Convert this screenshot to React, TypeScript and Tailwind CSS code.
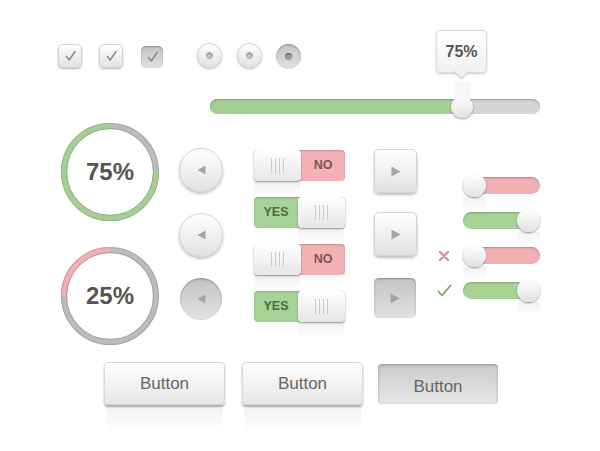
import React from "react";

const raised =
  "bg-linear-to-b from-white to-[#e2e2e2] border border-[#d4d4d4] shadow-[0_1px_2px_rgba(0,0,0,0.3)]";
const pressed =
  "bg-linear-to-b from-[#c4c4c4] to-[#e2e2e2] shadow-[inset_0_1px_2px_rgba(0,0,0,0.3),0_1px_0_rgba(255,255,255,0.8)]";

function Check() {
  return (
    <svg width="13" height="12" viewBox="0 0 13 12">
      <path d="M2.5 6.5 L5.2 10 L11 1.5" stroke="#8c8c8c" strokeWidth="1.6" fill="none" strokeLinecap="round" strokeLinejoin="round" />
    </svg>
  );
}

function Checkbox({ down }: { down?: boolean }) {
  return (
    <div
      className={`flex items-center justify-center rounded-[5px] ${
        down ? `size-[22px] mt-[2px] ${pressed}` : `size-[24px] ${raised}`
      }`}
    >
      <Check />
    </div>
  );
}

function Radio({ down }: { down?: boolean }) {
  return (
    <div
      className={`flex items-center justify-center rounded-full size-[25px] ${
        down ? pressed : raised
      }`}
    >
      <div
        className={`rounded-full size-[7px] ${
          down
            ? "bg-[#9a9a9a] shadow-[inset_0_1px_1px_rgba(0,0,0,0.5)]"
            : "bg-[#c4c4c4] border border-[#a8a8a8] shadow-[inset_0_1px_1px_rgba(0,0,0,0.3)]"
        }`}
      />
    </div>
  );
}

function Slider() {
  return (
    <div className="relative w-[330px] h-[15px] rounded-full bg-[#d6d6d6] shadow-[inset_0_1px_2px_rgba(0,0,0,0.3)] flex items-center">
      {/* reflection under tooltip */}
      <div className="absolute left-[244px] top-[-17px] w-[17px] h-[50px] bg-linear-to-b from-[rgba(0,0,0,0.035)] to-transparent" />
      <div className="h-full w-[252px] rounded-l-full bg-[#a6cf95] shadow-[inset_0_1px_2px_rgba(0,0,0,0.25)]" />
      <div className="relative -ml-[11px] size-[22px] rounded-full bg-linear-to-b from-white to-[#e0e0e0] shadow-[0_1px_2px_rgba(0,0,0,0.4)]" />
      {/* tooltip */}
      <div className="absolute left-[226px] top-[-69px] flex flex-col items-center">
        <div className="relative z-10 flex items-center justify-center w-[51px] h-[43px] rounded-[4px] bg-linear-to-b from-white to-[#f1f1f1] border border-[#dcdcdc] shadow-[0_1px_2px_rgba(0,0,0,0.2)]">
          <span className="text-[16px] font-bold text-[#555]">75%</span>
        </div>
        <div className="relative z-20 -mt-[7px] size-[11px] rotate-45 bg-[#f1f1f1] border-r border-b border-[#d4d4d4] shadow-[1px_1px_1px_rgba(0,0,0,0.08)]" />
      </div>
    </div>
  );
}

function Ring({ value, color, edge }: { value: number; color: string; edge: string }) {
  const r = 46;
  const c = 2 * Math.PI * r;
  const rot = value > 50 ? 0 : 180;
  return (
    <div className="relative flex items-center justify-center size-[98px]">
      <svg width="98" height="98" viewBox="0 0 98 98" className="absolute inset-0">
        <circle cx="49" cy="49" r={r} fill="none" stroke="#a3a3a3" strokeWidth="6" />
        <circle cx="49" cy="49" r={r} fill="none" stroke="#bcbcbc" strokeWidth="4" />
        <g transform={`rotate(${rot} 49 49)`}>
          <circle cx="49" cy="49" r={r} fill="none" stroke={edge} strokeWidth="6" strokeDasharray={`${(c * value) / 100} ${c}`} />
          <circle cx="49" cy="49" r={r} fill="none" stroke={color} strokeWidth="4" strokeDasharray={`${(c * value) / 100} ${c}`} />
        </g>
        <circle cx="49" cy="49" r="43" fill="none" stroke="rgba(0,0,0,0.06)" strokeWidth="1" />
      </svg>
      <span className="relative text-[24px] font-bold text-[#555]">{value}%</span>
    </div>
  );
}

function LeftTri() {
  return (
    <svg width="9" height="10" viewBox="0 0 9 10">
      <path d="M0.5 5 L8.5 0.5 L8.5 9.5 Z" fill="#a5a5a5" />
    </svg>
  );
}

function RightTri() {
  return (
    <svg width="10" height="11" viewBox="0 0 10 11">
      <path d="M9.5 5.5 L0.5 0.5 L0.5 10.5 Z" fill="#a5a5a5" />
    </svg>
  );
}

function RoundBtn({ down }: { down?: boolean }) {
  return (
    <div
      className={`flex items-center justify-center rounded-full ${
        down ? `size-[42px] ml-[1px] ${pressed}` : `size-[44px] ${raised} shadow-[0_2px_3px_rgba(0,0,0,0.25)]`
      }`}
    >
      <LeftTri />
    </div>
  );
}

function SquareBtn({ down }: { down?: boolean }) {
  return (
    <div
      className={`flex items-center justify-center rounded-[5px] ${
        down ? `w-[42px] h-[40px] ${pressed}` : `w-[43px] h-[44px] ${raised} shadow-[0_2px_3px_rgba(0,0,0,0.25)]`
      }`}
    >
      <RightTri />
    </div>
  );
}

function Grip() {
  return (
    <div className="flex gap-[3px]">
      {[0, 1, 2, 3].map((i) => (
        <div key={i} className="w-px h-[15px] bg-[#c9c9c9]" />
      ))}
    </div>
  );
}

function Toggle({ on }: { on: boolean }) {
  const knob = (
    <div className="relative flex items-center justify-center w-[47px] h-[31px] rounded-[4px] bg-linear-to-b from-white to-[#e6e6e6] shadow-[0_1px_2px_rgba(0,0,0,0.4)]">
      <Grip />
      <div className="absolute left-0 top-[31px] w-[46px] h-[16px] bg-linear-to-b from-[rgba(0,0,0,0.06)] to-transparent" />
    </div>
  );
  return (
    <div
      className={`flex w-[91px] h-[31px] rounded-[4px] shadow-[inset_0_1px_2px_rgba(0,0,0,0.2)] ${
        on ? "bg-[#a8d397] justify-end" : "bg-[#f3b2b4]"
      }`}
    >
      {on ? (
        <>
          <div className="flex-1 flex items-center justify-center text-[12.5px] font-bold text-[#4d6a43]">YES</div>
          {knob}
        </>
      ) : (
        <>
          {knob}
          <div className="flex-1 flex items-center justify-center text-[12.5px] font-bold text-[#7a5658]">NO</div>
        </>
      )}
    </div>
  );
}

function Switch({ on }: { on: boolean }) {
  return (
    <div
      className={`flex items-center w-[77px] h-[17px] rounded-full shadow-[inset_0_1px_2px_rgba(0,0,0,0.25)] ${
        on ? "bg-[#a8d397] justify-end" : "bg-[#f3b0b3]"
      }`}
    >
      <div className="relative size-[23px] -my-[3px] rounded-full bg-linear-to-b from-white to-[#e2e2e2] shadow-[0_1px_2px_rgba(0,0,0,0.4)]">
        <div className="absolute left-0 top-[23px] w-[23px] h-[14px] bg-linear-to-b from-[rgba(0,0,0,0.05)] to-transparent" />
      </div>
    </div>
  );
}

function Button({ down }: { down?: boolean }) {
  if (down) {
    return (
      <div className="flex items-center justify-center w-[120px] h-[40px] mt-[2px] pt-[5px] rounded-[4px] bg-linear-to-b from-[#cbcbcb] to-[#e8e8e8] shadow-[inset_0_1px_3px_rgba(0,0,0,0.3)] text-[17px] text-[#666]">
        Button
      </div>
    );
  }
  return (
    <div className="flex flex-col">
      <div className="flex items-center justify-center w-[121px] h-[43px] rounded-[4px] bg-linear-to-b from-white to-[#e6e6e6] border border-[#d8d8d8] shadow-[0_2px_2px_rgba(0,0,0,0.3)] text-[17px] text-[#666]">
        Button
      </div>
      <div className="mx-[2px] h-[30px] bg-linear-to-b from-[rgba(0,0,0,0.05)] to-transparent" />
    </div>
  );
}

export default function App() {
  return (
    <div className="w-[600px] h-[451px] overflow-hidden bg-white flex flex-col font-['Liberation_Sans',Arial,sans-serif]">
      {/* checkboxes & radios */}
      <div className="flex items-start mt-[44px] pl-[58px] h-[24px]">
        <Checkbox />
        <div className="ml-[17px]">
          <Checkbox />
        </div>
        <div className="ml-[18px]">
          <Checkbox down />
        </div>
        <div className="ml-[34px] mt-[-1px]">
          <Radio />
        </div>
        <div className="ml-[15px] mt-[-1px]">
          <Radio />
        </div>
        <div className="ml-[14px]">
          <Radio down />
        </div>
      </div>

      {/* slider */}
      <div className="mt-[31px] pl-[210px]">
        <Slider />
      </div>

      {/* middle */}
      <div className="flex items-start mt-[9px] pl-[61px]">
        <div className="flex flex-col gap-[26px]">
          <Ring value={75} color="#a6cf95" edge="#93bd82" />
          <Ring value={25} color="#f1b1b2" edge="#dc9c9d" />
        </div>

        <div className="flex flex-col gap-[21px] ml-[20px] mt-[25px]">
          <RoundBtn />
          <RoundBtn />
          <RoundBtn down />
        </div>

        <div className="flex flex-col gap-[16px] ml-[31px] mt-[27px]">
          <Toggle on={false} />
          <Toggle on />
          <Toggle on={false} />
          <Toggle on />
        </div>

        <div className="flex flex-col ml-[29px] mt-[26px]">
          <SquareBtn />
          <div className="mt-[19px]">
            <SquareBtn />
          </div>
          <div className="mt-[22px]">
            <SquareBtn down />
          </div>
        </div>

        <div className="flex flex-col gap-[12px] ml-[20px] mt-[51px]">
          <div className="flex items-center h-[23px]">
            <div className="w-[26px]" />
            <Switch on={false} />
          </div>
          <div className="flex items-center h-[23px]">
            <div className="w-[26px]" />
            <Switch on />
          </div>
          <div className="flex items-center h-[23px]">
            <div className="w-[26px] pl-[1px]">
              <svg width="12" height="12" viewBox="0 0 12 12">
                <path d="M2 2 L10 10 M10 2 L2 10" stroke="#e28d90" strokeWidth="2.4" strokeLinecap="round" />
              </svg>
            </div>
            <Switch on={false} />
          </div>
          <div className="flex items-center h-[23px]">
            <div className="w-[26px]">
              <svg width="15" height="13" viewBox="0 0 15 13">
                <path d="M1.5 7.5 L5 11.5 L13.5 1.5" stroke="#77a96b" strokeWidth="1.8" fill="none" strokeLinecap="round" strokeLinejoin="round" />
              </svg>
            </div>
            <Switch on />
          </div>
        </div>
      </div>

      {/* buttons */}
      <div className="flex items-start mt-[17px] pl-[104px]">
        <Button />
        <div className="ml-[17px]">
          <Button />
        </div>
        <div className="ml-[15px]">
          <Button down />
        </div>
      </div>
    </div>
  );
}
